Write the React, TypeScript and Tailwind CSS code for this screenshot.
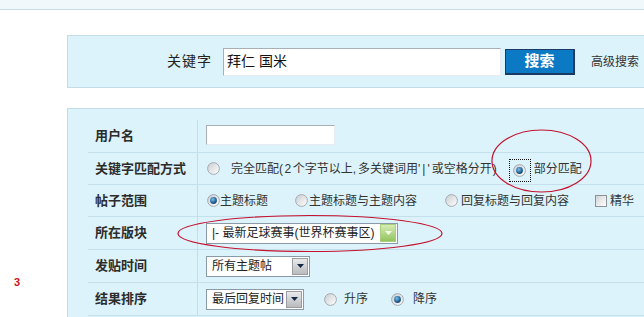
import React from "react";

function Radio({ checked, id }: { checked?: boolean; id: string }) {
  return (
    <svg width="13" height="13" viewBox="0 0 13 13" className="shrink-0 block">
      <defs>
        <linearGradient id={id} x1="0" y1="0" x2="1" y2="1">
          <stop offset="0" stopColor="#c9cdd1" />
          <stop offset="1" stopColor="#ffffff" />
        </linearGradient>
        <radialGradient id={id + "d"} cx="0.4" cy="0.35" r="0.7">
          <stop offset="0" stopColor="#7fc0ea" />
          <stop offset="0.6" stopColor="#2a6fa3" />
          <stop offset="1" stopColor="#123b5e" />
        </radialGradient>
      </defs>
      <circle cx="6.5" cy="6.5" r="5.9" fill={`url(#${id})`} stroke="#a3abb2" strokeWidth="1" />
      {checked && <circle cx="6.5" cy="6.5" r="3.4" fill={`url(#${id}d)`} />}
    </svg>
  );
}

function Arrow({ green }: { green?: boolean }) {
  return green ? (
    <div className="w-[16px] h-[18px] border border-[#a9cf7d] bg-gradient-to-b from-[#d6ecb4] to-[#93c45c] flex items-center justify-center">
      <svg width="7" height="4" viewBox="0 0 7 4" className="block">
        <path d="M0 0H7L3.5 4Z" fill="#f4faea" />
      </svg>
    </div>
  ) : (
    <div className="w-[16px] h-[17px] border border-[#9a9ea3] bg-gradient-to-b from-[#e9e9ea] to-[#b9bbbe] flex items-center justify-center">
      <svg width="7" height="4" viewBox="0 0 7 4" className="block">
        <path d="M0 0H7L3.5 4Z" fill="#14284a" />
      </svg>
    </div>
  );
}

function Select({ text, w, green }: { text: string; w: string; green?: boolean }) {
  return (
    <div className={`${w} h-[21px] flex items-center border border-[#8a9aa8] bg-white`}>
      <span className="flex-1 pl-[5px] text-[12px] text-[#222] whitespace-nowrap overflow-hidden">{text}</span>
      <div className="mr-[1px]">
        <Arrow green={green} />
      </div>
    </div>
  );
}

function Row({ label, h, children }: { label: string; h: string; children: React.ReactNode }) {
  return (
    <div className={`flex ${h} border-b border-[#c4e0ec]`}>
      <div className="w-[110px] shrink-0 border-r border-[#c4dde8] pl-[7px] flex items-center text-[13px] font-bold text-[#2c2c2c] whitespace-nowrap">
        {label}
      </div>
      <div className="flex items-center pl-[8px] text-[12px] text-[#333] whitespace-nowrap">{children}</div>
    </div>
  );
}

export default function App() {
  return (
    <div className="w-[644px] h-[317px] overflow-hidden bg-white relative font-['Liberation_Sans','Noto_Sans_CJK_SC',sans-serif]">
      <div className="h-[10px] bg-[#f1f8fb] border-b border-[#c7dbe4]" />
      <div className="flex">
        <div className="w-[67px] shrink-0 pt-[259px] pl-[14px]">
          <span className="text-[11px] font-bold text-[#d0101c] leading-[14px]">3</span>
        </div>
        <div className="flex-1 min-w-0">
          <div className="mt-[25px] h-[53px] border-t border-l border-b border-[#c3dde8] bg-[#dcf3fb] flex items-center pl-[99px] whitespace-nowrap">
            <span className="text-[14px] tracking-[1px] text-[#222]">关键字</span>
            <div className="ml-[11px] w-[278px] h-[28px] bg-white border border-t-[#a8b0b6] border-l-[#a8b0b6] border-r-[#e6ecf0] border-b-[#e6ecf0] flex items-center pl-[3px] text-[14px] text-[#111]">
              拜仁 国米
            </div>
            <div className="ml-[4px] w-[70px] h-[26px] bg-[#0b79c4] border border-[#1b3a63] border-r-2 border-b-2 flex items-center justify-center text-white font-bold text-[15px]">
              搜索
            </div>
            <span className="ml-[16px] text-[12px] text-[#333]">高级搜索</span>
          </div>

          <div className="mt-[20px] border-t border-l border-[#c3dde8] bg-[#dcf3fb] pt-[11px] pl-[20px] h-[240px]">
            <Row label="用户名" h="h-[33px]">
              <div className="w-[129px] h-[20px] bg-white border border-t-[#a8b0b6] border-l-[#a8b0b6] border-r-[#e6ecf0] border-b-[#e6ecf0] -mt-[2px]" />
            </Row>
            <Row label="关键字匹配方式" h="h-[32px]">
              <div className="ml-[1px]">
                <Radio id="r1" />
              </div>
              <span className="ml-[11px]">
                完全匹配<span className="tracking-[1.5px]">(2</span>个字节以上<span className="tracking-[2px]">,</span>多关键词用<span className="tracking-[2px]">'|'</span>或空格分开<span className="pl-[1px]">)</span>
              </span>
              <div className="ml-[12px] w-[22px] h-[23px] border border-dotted border-[#111] flex items-center justify-center mt-[4px]">
                <Radio id="r2" checked />
              </div>
              <span className="ml-[3px]">部分匹配</span>
            </Row>
            <Row label="帖子范围" h="h-[32px]">
              <div className="ml-[1px]">
                <Radio id="r3" checked />
              </div>
              <span className="ml-[0px]">主题标题</span>
              <div className="ml-[27px]">
                <Radio id="r4" />
              </div>
              <span className="ml-[1px]">主题标题与主题内容</span>
              <div className="ml-[28px]">
                <Radio id="r5" />
              </div>
              <span className="ml-[3px]">回复标题与回复内容</span>
              <div className="ml-[26px] w-[12px] h-[12px] border border-[#8d9296] bg-gradient-to-br from-[#d2d4d6] to-[#ffffff]" />
              <span className="ml-[3px]">精华</span>
            </Row>
            <Row label="所在版块" h="h-[33px]">
              <Select text="|- 最新足球赛事(世界杯赛事区)" w="w-[192px]" green />
            </Row>
            <Row label="发贴时间" h="h-[33px]">
              <Select text="所有主题帖" w="w-[104px]" />
            </Row>
            <Row label="结果排序" h="h-[33px]">
              <Select text="最后回复时间" w="w-[98px]" />
              <div className="ml-[20px]">
                <Radio id="r6" />
              </div>
              <span className="ml-[7px]">升序</span>
              <div className="ml-[23px]">
                <Radio id="r7" checked />
              </div>
              <span className="ml-[9px]">降序</span>
            </Row>
          </div>
        </div>
      </div>

      <svg className="absolute inset-0 pointer-events-none" width="644" height="317" viewBox="0 0 644 317">
        <ellipse cx="541.5" cy="161" rx="49.5" ry="31" fill="none" stroke="#c4112e" strokeWidth="1.2" />
        <ellipse cx="310" cy="233.5" rx="132" ry="18" fill="none" stroke="#c4112e" strokeWidth="1.2" />
      </svg>
    </div>
  );
}
